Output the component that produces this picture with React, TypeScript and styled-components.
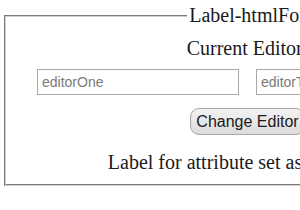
import React from "react";
import styled, { createGlobalStyle } from "styled-components";

const GlobalStyle = createGlobalStyle`
  html, body {
    margin: 0;
    padding: 0;
    background: #ffffff;
    overflow: hidden;
  }
  body {
    font-family: "Liberation Serif", "Times New Roman", serif;
    color: #1a1a1a;
  }
`;

const Frame = styled.fieldset`
  box-sizing: border-box;
  width: 487px;
  margin: 4px 0 0 4px;
  padding: 0 12px 10px;
  border: 2px groove #d0d0d0;
  text-align: center;
  font-size: 20px;
`;

const Legend = styled.legend`
  margin: 0 auto;
  padding: 0 2px;
  font-size: 20px;
  color: #1a1a1a;
`;

const Line = styled.p<{ $top: number }>`
  margin: ${(p) => p.$top}px 0 0;
  font-size: 20px;
  line-height: normal;
  white-space: nowrap;
`;

const EditorRow = styled.div`
  display: flex;
  justify-content: center;
  gap: 17px;
  margin-top: 9px;
`;

const EditorInput = styled.input`
  box-sizing: border-box;
  width: 202px;
  height: 26px;
  margin: 0;
  padding: 0 4px;
  border: 1px solid #a9a9a9;
  border-radius: 0;
  font-family: "Liberation Sans", Arial, sans-serif;
  font-size: 14px;
  color: #7a7a7a;
  background: #fff;
  outline: none;
`;

const ActionButton = styled.button`
  box-sizing: border-box;
  height: 27px;
  margin: 13px auto 0;
  padding: 0 5px;
  display: block;
  border: 1px solid #a6a6a6;
  border-radius: 9px;
  background: linear-gradient(#f2f2f2, #dcdcdc);
  font-family: "Liberation Sans", Arial, sans-serif;
  font-size: 16px;
  color: #1a1a1a;
`;

export default function App() {
  return (
    <>
      <GlobalStyle />
      <Frame>
        <Legend>Label-htmlFor</Legend>
        <Line $top={10}>Current Editor:</Line>
        <EditorRow>
          <EditorInput readOnly value="editorOne" />
          <EditorInput readOnly value="editorTwo" />
        </EditorRow>
        <ActionButton type="button">Change Editor</ActionButton>
        <Line $top={16}>Label for attribute set as editorOne</Line>
      </Frame>
    </>
  );
}
